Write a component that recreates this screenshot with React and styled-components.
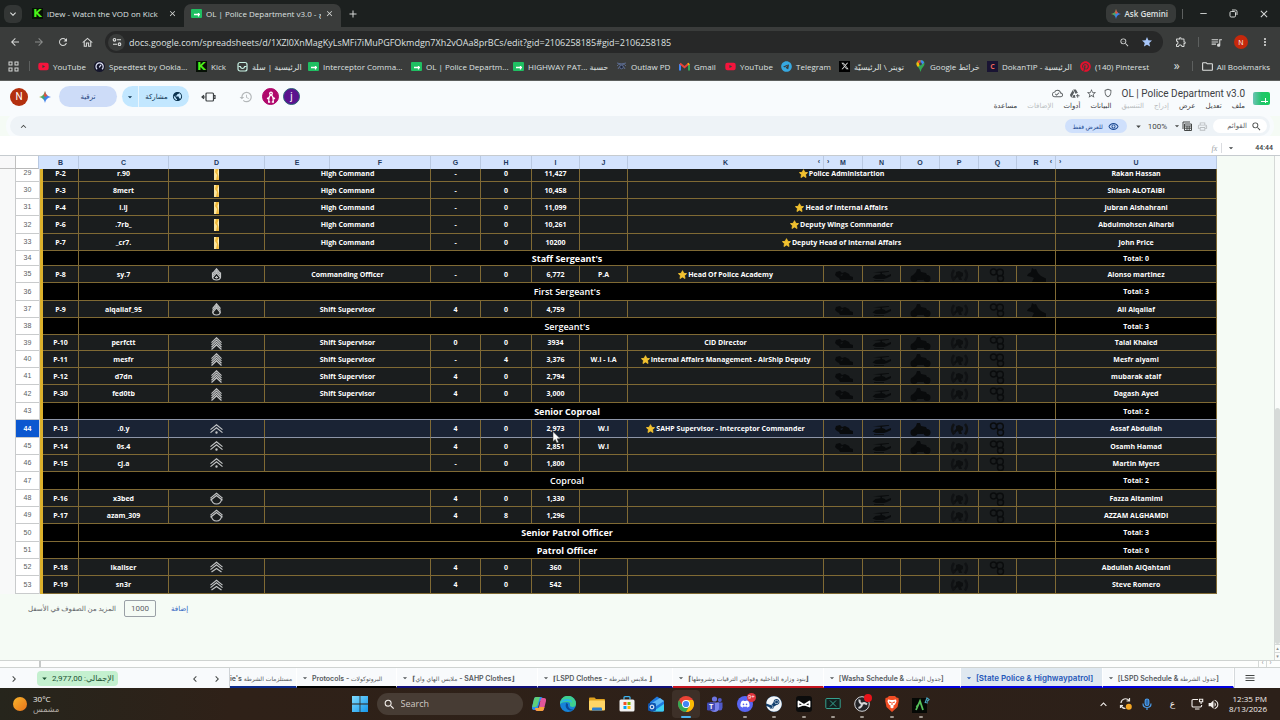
import React, { useState } from "react";
import styled, { createGlobalStyle, css } from "styled-components";
import {
  MdAdd,
  MdArrowBack,
  MdArrowDropDown,
  MdArrowForward,
  MdClose,
  MdHistory,
  MdKeyboardArrowDown,
  MdKeyboardArrowLeft,
  MdKeyboardArrowRight,
  MdKeyboardArrowUp,
  MdMenu,
  MdMoreVert,
  MdOutlineAddToDrive,
  MdOutlineCloudDone,
  MdOutlineExtension,
  MdOutlineFolder,
  MdOutlineHome,
  MdOutlinePrint,
  MdOutlineRemoveRedEye,
  MdOutlineShield,
  MdPublic,
  MdQueueMusic,
  MdRefresh,
  MdRemove,
  MdSearch,
  MdStar,
  MdStarBorder,
  MdVolumeUp,
  MdZoomOut
} from "react-icons/md";
import {
  FaDiscord,
  FaPinterest,
  FaSteam,
  FaTelegram,
  FaXTwitter,
  FaYoutube
} from "react-icons/fa6";

const URL_TEXT =
  "docs.google.com/spreadsheets/d/1XZl0XnMagKyLsMFi7iMuPGFOkmdgn7Xh2vOAa8prBCs/edit?gid=2106258185#gid=2106258185";

const bookmarks = [
  { label: "YouTube", icon: "youtube", w: 56 },
  { label: "Speedtest by Ookla...", icon: "speed", w: 102 },
  { label: "Kick", icon: "kick", w: 41 },
  { label: "الرئيسية | سلة", icon: "salla", w: 71 },
  { label: "Interceptor Comma...", icon: "sheet", w: 103 },
  { label: "OL | Police Departm...", icon: "sheet", w: 102 },
  { label: "HIGHWAY PAT... حسبة", icon: "sheet", w: 103 },
  { label: "Outlaw PD", icon: "outlaw", w: 63 },
  { label: "Gmail", icon: "gmail", w: 46 },
  { label: "YouTube", icon: "youtube", w: 56 },
  { label: "Telegram", icon: "telegram", w: 58 },
  { label: "تويتر \\ الرئيسيّة", icon: "x", w: 76 },
  { label: "Google خرائط", icon: "maps", w: 72 },
  { label: "DokanTIP - الرئيسية", icon: "dokan", w: 93 },
  { label: "(140) Pinterest", icon: "pinterest", w: 68 }
];

const menus = [
  { label: "ملف" },
  { label: "تعديل" },
  { label: "عرض" },
  { label: "إدراج", off: true },
  { label: "التنسيق", off: true },
  { label: "البيانات" },
  { label: "أدوات" },
  { label: "الإضافات", off: true },
  { label: "مساعدة" }
];

const columns = [
  { name: "", w: 24 },
  { name: "", w: 4 },
  { name: "B", w: 36 },
  { name: "C", w: 90 },
  { name: "D", w: 96 },
  { name: "E", w: 65 },
  { name: "F", w: 101 },
  { name: "G", w: 50 },
  { name: "H", w: 51 },
  { name: "I", w: 48 },
  { name: "J", w: 48 },
  { name: "K", w: 196, before: true },
  { name: "M", w: 39, after: true },
  { name: "N", w: 38 },
  { name: "O", w: 39 },
  { name: "P", w: 39 },
  { name: "Q", w: 38 },
  { name: "R", w: 39, before: true },
  { name: "U", w: 161, after: true }
];

const rows = [
  { n: 29, h: 17, id: "P-2", nick: "r.90", rank: "bar", role: "High Command", g: "-", hh: "0", pts: "11,427", wide: "Police Administartion", star: true, name: "Rakan Hassan" },
  { n: 30, h: 17, id: "P-3", nick: "8mert", rank: "bar", role: "High Command", g: "-", hh: "0", pts: "10,458", wide: " ", name: "Shlash ALOTAIBI" },
  { n: 31, h: 17, id: "P-4", nick: "i.lj", rank: "bar", role: "High Command", g: "-", hh: "0", pts: "11,099", wide: "Head of Internal Affairs", star: true, name: "Jubran Alshahrani" },
  { n: 32, h: 18, id: "P-6", nick: ".7rb_", rank: "bar", role: "High Command", g: "-", hh: "0", pts: "10,261", wide: "Deputy Wings Commander", star: true, name: "Abdulmohsen Alharbi" },
  { n: 33, h: 17, id: "P-7", nick: "_cr7.", rank: "bar", role: "High Command", g: "-", hh: "0", pts: "10200", wide: "Deputy Head of Internal Affairs", star: true, name: "John Price" },
  { n: 34, h: 15, section: "Staff Sergeant's", total: 0, big: true },
  { n: 35, h: 17, id: "P-8", nick: "sy.7", rank: "staff", role: "Commanding Officer", g: "-", hh: "0", pts: "6,772", j: "P.A", k: "Head Of Police Academy", star: true, wings: "MNOPQR", name: "Alonso martinez" },
  { n: 36, h: 18, section: "First Sergeant's", total: 3 },
  { n: 37, h: 17, id: "P-9", nick: "alqallaf_95", rank: "first", role: "Shift Supervisor", g: "4", hh: "0", pts: "4,759", wings: "MNOPQR", name: "Ali Alqallaf" },
  { n: 38, h: 17, section: "Sergeant's", total: 3 },
  { n: 39, h: 16, id: "P-10", nick: "perfctt", rank: "four", role: "Shift Supervisor", g: "0", hh: "0", pts: "3934", k: "CID Director", wings: "MNOPQ", name: "Talal Khaled" },
  { n: 40, h: 17, id: "P-11", nick: "mesfr", rank: "four", role: "Shift Supervisor", g: "-", hh: "4", pts: "3,376", j: "W.I - I.A", k: "Internal Affairs Management - AirShip Deputy", star: true, wings: "MNOPQ", name: "Mesfr alyami" },
  { n: 41, h: 17, id: "P-12", nick: "d7dn", rank: "four", role: "Shift Supervisor", g: "4", hh: "0", pts: "2,794", wings: "MNOPQ", name: "mubarak ataif" },
  { n: 42, h: 18, id: "P-30", nick: "fed0tb", rank: "four", role: "Shift Supervisor", g: "4", hh: "0", pts: "3,000", wings: "MNOPQ", name: "Dagash Ayed" },
  { n: 43, h: 17, section: "Senior Coproal", total: 2, big: true },
  { n: 44, h: 18, id: "P-13", nick: ".0.y", rank: "senior", g: "4", hh: "0", pts: "2,973", j: "W.I", k: "SAHP Supervisor - Interceptor Commander", star: true, wings: "MNOPQ", name: "Assaf Abdullah" },
  { n: 45, h: 17, id: "P-14", nick: "0s.4", rank: "senior", g: "4", hh: "0", pts: "2,851", j: "W.I", wings: "MNOPQ", name: "Osamh Hamad" },
  { n: 46, h: 17, id: "P-15", nick: "cj.a", rank: "senior", g: "-", hh: "0", pts: "1,800", wings: "PQ", name: "Martin Myers" },
  { n: 47, h: 18, section: "Coproal", total: 2 },
  { n: 48, h: 17, id: "P-16", nick: "x3bed", rank: "cop", g: "4", hh: "0", pts: "1,330", wings: "NPQ", name: "Fazza Altamimi" },
  { n: 49, h: 17, id: "P-17", nick: "azam_309", rank: "cop", g: "4", hh: "8", pts: "1,296", wings: "NPQ", name: "AZZAM ALGHAMDI" },
  { n: 50, h: 18, section: "Senior Patrol Officer", total: 3, big: true },
  { n: 51, h: 17, section: "Patrol Officer", total: 0, big: true },
  { n: 52, h: 17, id: "P-18", nick: "lkaiiser", rank: "two", g: "4", hh: "0", pts: "360", wings: "PQ", name: "Abdullah AlQahtani" },
  { n: 53, h: 18, id: "P-19", nick: "sn3r", rank: "two", g: "4", hh: "0", pts: "542", wings: "P", name: "Steve Romero" }
];

const sheetTabs = [
  { label: "ie's مستلزمات الشرطة", w: 68, line: "#0b2a8c", cut: true },
  { label: "Protocols - البروتوكولات", w: 99, line: "#000" },
  { label: "⌈ملابس الهاي واي - SAHP Clothes⌋", w: 141, line: "#10107a" },
  { label: "⌈LSPD Clothes - ملابس الشرطة ⌋", w: 135, line: "#10107a" },
  { label: "⌈بنود وزارة الداخلية وقوانين الترقيات وشروطها⌋", w: 151, line: "#c4131f" },
  { label: "[Washa Schedule & جدول الوشات]", w: 137, line: "#0000e0" },
  { label: "[State Police & Highwaypatrol]", w: 142, line: "#0000e0", active: true },
  { label: "[LSPD Schedule & جدول الشرطة]", w: 131, line: "#0000e0" }
];

function App() {
  const [url, setUrl] = useState(URL_TEXT);
  const [rowCount, setRowCount] = useState("1000");
  const [search, setSearch] = useState("");

  return (
    <Page>
      <GlobalStyle />
      <TabStrip>
        <TabMenuButton aria-label="Search tabs">
          <MdKeyboardArrowDown size={12} />
        </TabMenuButton>
        <BrowserTab>
          <SiteIcon name="kick" />
          <TabTitle>iDew - Watch the VOD on Kick</TabTitle>
          <IconButton aria-label="Close tab">
            <MdClose size={9} />
          </IconButton>
        </BrowserTab>
        <BrowserTab $active>
          <SiteIcon name="sheet" />
          <TabTitle>OL | Police Department v3.0 - ج</TabTitle>
          <IconButton aria-label="Close tab">
            <MdClose size={9} />
          </IconButton>
        </BrowserTab>
        <IconButton aria-label="New tab">
          <MdAdd size={12} />
        </IconButton>
        <Spacer />
        <GeminiButton>
          <Spark size={10} />
          Ask Gemini
        </GeminiButton>
        <Divider />
        <WindowButtons>
          <IconButton aria-label="Minimize">
            <MdRemove size={11} />
          </IconButton>
          <IconButton aria-label="Restore">
            <svg width="9" height="9" viewBox="0 0 9 9" fill="none" stroke="currentColor">
              <rect x="1" y="2.5" width="5.5" height="5.5" rx="1.2" />
              <path d="M3 1h3.5Q8 1 8 2.5V6" />
            </svg>
          </IconButton>
          <IconButton aria-label="Close">
            <MdClose size={12} />
          </IconButton>
        </WindowButtons>
      </TabStrip>

      <AddressBar>
        <NavButtons>
          <IconButton aria-label="Back"><MdArrowBack size={12} /></IconButton>
          <IconButton aria-label="Forward" $dim><MdArrowForward size={12} /></IconButton>
          <IconButton aria-label="Reload"><MdRefresh size={12} /></IconButton>
          <IconButton aria-label="Home"><MdOutlineHome size={13} /></IconButton>
        </NavButtons>
        <Omnibox>
          <SiteInfo aria-label="Site information">
            <svg width="10" height="10" viewBox="0 0 10 10" fill="none" stroke="currentColor" strokeWidth="1.1">
              <circle cx="2.5" cy="2.8" r="1.3" />
              <path d="M5 2.8h4M1 7.2h4" />
              <circle cx="7.5" cy="7.2" r="1.3" />
            </svg>
          </SiteInfo>
          <UrlInput aria-label="Address" value={url} onChange={e => setUrl(e.target.value)} />
          <IconButton aria-label="Zoom"><MdZoomOut size={11} /></IconButton>
          <IconButton aria-label="Bookmark" $tint="#a8c7fa"><MdStar size={12} /></IconButton>
        </Omnibox>
        <BarTools>
          <IconButton aria-label="Extensions"><MdOutlineExtension size={12} /></IconButton>
          <Divider />
          <IconButton aria-label="Media"><MdQueueMusic size={13} /></IconButton>
          <Avatar $size={14} $bg="#c5280c">N</Avatar>
          <IconButton aria-label="More"><MdMoreVert size={12} /></IconButton>
        </BarTools>
      </AddressBar>

      <BookmarkBar>
        <IconButton aria-label="Apps">
          <svg width="11" height="11" viewBox="0 0 11 11" fill="none" stroke="currentColor">
            <rect x="1" y="1" width="3" height="3" />
            <rect x="7" y="1" width="3" height="3" />
            <rect x="1" y="7" width="3" height="3" />
            <rect x="7" y="7" width="3" height="3" />
          </svg>
        </IconButton>
        <Divider />
        <BookmarkList>
          {bookmarks.map((b, index) => (
            <Bookmark key={index} href="#" $w={b.w}>
              <SiteIcon name={b.icon} />
              <span>{b.label}</span>
            </Bookmark>
          ))}
        </BookmarkList>
        <More>»</More>
        <Divider />
        <AllBookmarks href="#">
          <MdOutlineFolder size={13} />
          All Bookmarks
        </AllBookmarks>
      </BookmarkBar>

      <DocHeader>
        <DocActions>
          <Avatar $size={18} $bg="#b3300f">N</Avatar>
          <Spark size={12} />
          <UpgradeButton>ترقية</UpgradeButton>
          <ShareGroup>
            <ShareCaret aria-label="Share options"><MdArrowDropDown size={10} /></ShareCaret>
            <ShareButton>
              مشاركة
              <MdPublic size={11} />
            </ShareButton>
          </ShareGroup>
          <IconButton aria-label="Meet" $tint="#3c4043">
            <svg width="15" height="12" viewBox="0 0 15 12" fill="none" stroke="currentColor" strokeWidth="1.2">
              <rect x="5" y="2" width="7.5" height="8" rx="1" />
              <path d="M3 4.2L1 6l2 1.800M1 6h3.500M12.500 4.500H14v3h-1.500" />
            </svg>
          </IconButton>
          <IconButton aria-label="History" $tint="#b4b8ba"><MdHistory size={14} /></IconButton>
          <Viewers>
            <Avatar $size={17} $bg="#b0086c" $ring="#b0086c">
              <svg width="10" height="12" viewBox="0 0 10 12" fill="none" stroke="#fff" strokeWidth="1.3">
                <circle cx="5" cy="2.5" r="1.3" />
                <path d="M5 3.8Q2.5 5 2.8 10.5M5 3.8Q7.5 5 7.2 10.5M2.5 6.5L1.2 8M7.5 6.5L8.8 8M2 11h2.2M5.8 11H8" />
              </svg>
            </Avatar>
            <Avatar $size={17} $bg="#5b128f" $ring="#2a6478">j</Avatar>
          </Viewers>
        </DocActions>
        <DocInfo>
          <div>
            <TitleRow>
              <MdOutlineCloudDone size={11} />
              <MdOutlineAddToDrive size={11} />
              <MdStarBorder size={11} />
              <MdOutlineShield size={10} />
              <h1>OL | Police Department v3.0</h1>
            </TitleRow>
            <MenuRow dir="rtl">
              {menus.map(m => (
                <MenuButton key={m.label} $off={m.off}>{m.label}</MenuButton>
              ))}
            </MenuRow>
          </div>
          <svg width="17" height="14" viewBox="0 0 17 14">
            <defs>
              <linearGradient id="doc" x1="0" x2="1">
                <stop offset="0" stopColor="#6cc3b4" />
                <stop offset="0.5" stopColor="#22c46c" />
                <stop offset="1" stopColor="#17ce5c" />
              </linearGradient>
            </defs>
            <rect width="17" height="13" rx="2" fill="url(#doc)" />
            <path d="M8 9.5h7M12.5 6v5" stroke="#fff" />
          </svg>
        </DocInfo>
      </DocHeader>

      <SheetToolbar>
        <IconButton aria-label="Hide menus" $tint="#444746"><MdKeyboardArrowUp size={11} /></IconButton>
        <Spacer />
        <ViewOnly>
          للعرض فقط
          <MdOutlineRemoveRedEye size={11} />
        </ViewOnly>
        <ZoomButton>
          <MdArrowDropDown size={11} />
          100%
        </ZoomButton>
        <IconButton aria-label="Filters" $tint="#444746">
          <MdArrowDropDown size={10} />
          <svg width="10" height="10" viewBox="0 0 10 10" fill="none" stroke="currentColor">
            <path d="M2.5 3h7v6.5h-7zM2.5 5h7M5 5v4.5M7.2 5v4.5M2.5 7.2h7M1 8V1h7" />
          </svg>
        </IconButton>
        <IconButton aria-label="Print" $tint="#b9bdc0"><MdOutlinePrint size={11} /></IconButton>
        <MenuSearch>
          <input aria-label="Menus" dir="rtl" placeholder="القوائم" value={search} onChange={e => setSearch(e.target.value)} />
          <MdSearch size={11} />
        </MenuSearch>
      </SheetToolbar>

      <FormulaBar>
        <em>fx</em>
        <FormulaDivider />
        <MdArrowDropDown size={10} />
        <span>44:44</span>
      </FormulaBar>

      <SheetArea>
        <Gutter />
        <SheetMain>
          <HeadTable>
            <Cols />
            <thead>
              <tr>
                {columns.map((c, index) => (
                  <ColumnHead key={index} $corner={index === 0} $bar={index === 1}>
                    {c.after && <Nudge $side="left">›</Nudge>}
                    {c.name}
                    {c.before && <Nudge $side="right">‹</Nudge>}
                  </ColumnHead>
                ))}
              </tr>
            </thead>
          </HeadTable>
          <BodyClip>
            <BodyTable>
              <Cols />
              <tbody>
                {rows.map(row =>
                  row.section ? (
                    <SectionRow key={row.n} row={row} />
                  ) : (
                    <MemberRow key={row.n} row={row} selected={row.n === 44} />
                  )
                )}
              </tbody>
            </BodyTable>
          </BodyClip>
          <AddRows>
            <label htmlFor="more-rows">المزيد من الصفوف في الأسفل</label>
            <input id="more-rows" value={rowCount} onChange={e => setRowCount(e.target.value)} />
            <button>إضافة</button>
          </AddRows>
        </SheetMain>
        <ScrollTrack>
          <ScrollThumb />
          <ScrollArrow>▴</ScrollArrow>
          <ScrollArrow>▾</ScrollArrow>
        </ScrollTrack>
      </SheetArea>

      <BottomScroll>
        <ScrollStub />
        <Spacer />
        <SideArrow>‹</SideArrow>
        <SideArrow>›</SideArrow>
      </BottomScroll>

      <SheetBar>
        <SheetBarLeft>
          <IconButton aria-label="Side panel" $tint="#444746"><MdKeyboardArrowRight size={12} /></IconButton>
          <SumButton>
            <MdArrowDropDown size={11} />
            <bdi dir="rtl">الإجمالي: 2,977,00</bdi>
          </SumButton>
          <Spacer />
          <IconButton aria-label="Previous sheets" $tint="#444746"><MdKeyboardArrowLeft size={12} /></IconButton>
          <IconButton aria-label="Next sheets" $tint="#444746"><MdKeyboardArrowRight size={12} /></IconButton>
        </SheetBarLeft>
        <SheetTabs>
          {sheetTabs.map(t => (
            <SheetTab key={t.label} $w={t.w} $line={t.line} $active={t.active}>
              {!t.cut && <MdArrowDropDown size={10} />}
              <TabLabel label={t.label} />
            </SheetTab>
          ))}
        </SheetTabs>
        <AllSheets aria-label="All sheets"><MdMenu size={12} /></AllSheets>
      </SheetBar>

      <Taskbar>
        <Weather>
          <Sun />
          <div>
            <div>30°C</div>
            <WeatherNote>مشمس</WeatherNote>
          </div>
        </Weather>
        <TaskCenter>
          <TaskButton aria-label="Start">
            <svg width="16" height="16" viewBox="0 0 16 16">
              <defs>
                <linearGradient id="win" x1="0" y1="0" x2="1" y2="1">
                  <stop offset="0" stopColor="#7fdcff" />
                  <stop offset="1" stopColor="#1597ea" />
                </linearGradient>
              </defs>
              <path fill="url(#win)" d="M0 0h7.6v7.6H0zM8.4 0H16v7.6H8.4zM0 8.4h7.6V16H0zM8.4 8.4H16V16H8.4z" />
            </svg>
          </TaskButton>
          <TaskSearch>
            <MdSearch size={13} />
            <input aria-label="Search" placeholder="Search" />
          </TaskSearch>
          <TaskIcons>
            {taskApps.map(app => (
              <TaskButton key={app.name} aria-label={app.name} $active={app.active} $open={app.open}>
                {app.icon}
              </TaskButton>
            ))}
          </TaskIcons>
        </TaskCenter>
        <Tray>
          <MdKeyboardArrowUp size={13} />
          <svg width="14" height="14" viewBox="0 0 14 14" fill="none" stroke="#e8e4e0" strokeWidth="1.2">
            <path d="M2 6A4.5 4.5 0 0 1 10 3.5M10.5 1v3h-3M2 8q1 3.5 4.5 3.5M1.5 11V8.5H4" />
            <circle cx="9.8" cy="9.8" r="3" fill="#f5a623" stroke="none" />
          </svg>
          <svg width="10" height="13" viewBox="0 0 10 13" fill="none" stroke="#4a9be8" strokeWidth="1.2">
            <rect x="3.2" y="1" width="3.6" height="6.5" rx="1.8" fill="#2d6cb0" />
            <path d="M1 5.5q0 4 4 4t4-4M5 9.5V12" />
          </svg>
          <Language>ع</Language>
          <TrayPair>
            <svg width="13" height="12" viewBox="0 0 13 12" fill="none" stroke="currentColor" strokeWidth="1.1">
              <path d="M7 1.5H2.2Q1 1.5 1 2.7v5Q1 9 2.2 9h7.2q1.2 0 1.2-1.2V7M4 11h4.5M8.5 1.2h3.2v2.6H8.5zM10.1 3.8V6" />
            </svg>
            <MdVolumeUp size={13} />
          </TrayPair>
          <Clock>
            <div>12:35 PM</div>
            <div>8/13/2026</div>
          </Clock>
        </Tray>
      </Taskbar>
    </Page>
  );
}

function Cols() {
  return (
    <colgroup>
      {columns.map((c, index) => (
        <Col key={index} $w={c.w} />
      ))}
    </colgroup>
  );
}

// Arabic runs are set smaller than the latin ones
function TabLabel({ label }) {
  const parts = label.split(/([\u0600-\u06FF][\u0600-\u06FF ]*)/);
  return (
    <span>
      {parts.map((part, index) =>
        index % 2 ? <ArabicRun key={index}>{part}</ArabicRun> : part
      )}
    </span>
  );
}

function SectionRow({ row }) {
  return (
    <Row $h={row.h}>
      <RowNumber>{row.n}</RowNumber>
      <GoldCell />
      <Cell $black />
      <Cell $black $title $big={row.big} colSpan={15}>{row.section}</Cell>
      <Cell $black>Total: {row.total}</Cell>
    </Row>
  );
}

function MemberRow({ row, selected }) {
  return (
    <Row $h={row.h} $selected={selected}>
      <RowNumber $selected={selected}>{row.n}</RowNumber>
      <GoldCell />
      <Cell>{row.id}</Cell>
      <Cell>{row.nick}</Cell>
      <Cell><Rank kind={row.rank} /></Cell>
      <Cell colSpan={2}>{row.role}</Cell>
      <Cell>{row.g}</Cell>
      <Cell>{row.hh}</Cell>
      <Cell>
        {row.pts}
        {selected && <Cursor />}
      </Cell>
      <Cell>{row.j}</Cell>
      {row.wide ? (
        <Cell colSpan={7}>
          {row.star && <GoldStar />}
          {row.wide}
        </Cell>
      ) : (
        <>
          <Cell>
            {row.star && <GoldStar />}
            {row.k}
          </Cell>
          {"MNOPQR".split("").map(w => (
            <Cell key={w}>{row.wings.includes(w) && <Wing kind={w} />}</Cell>
          ))}
        </>
      )}
      <Cell>{row.name}</Cell>
    </Row>
  );
}

function GoldStar() {
  return (
    <StarSvg width="9" height="9" viewBox="0 0 20 19">
      <path
        fill="#f2c230"
        stroke="#f2c230"
        strokeWidth="2"
        strokeLinejoin="round"
        d="M10 1l2.7 5.8 6.3.8-4.6 4.4 1.2 6.3L10 15.2l-5.6 3.1L5.6 12 1 7.6l6.3-.8z"
      />
    </StarSvg>
  );
}

function Cursor() {
  return (
    <CursorSvg width="9" height="13" viewBox="0 0 9 13">
      <path fill="#fff" stroke="#333" strokeWidth="0.5" d="M1 .5v10l2.3-2.1 1.5 3.7 1.8-.8L5.1 7.8h3.2z" />
    </CursorSvg>
  );
}

function Rank({ kind }) {
  if (kind === "bar") {
    return (
      <svg width="5" height="12" viewBox="0 0 5 12">
        <rect width="5" height="12" fill="#f0b93a" />
        <path d="M0 0h2l-1 4 2 3-1 5H0z" fill="#fbe6a0" />
        <path d="M5 0L3.5 4l1 4L5 12z" fill="#fdf0bd" />
      </svg>
    );
  }
  const tops = {
    staff: [0, 2, 4],
    first: [0, 2, 4],
    four: [0, 2.3, 4.6, 6.9],
    senior: [1, 4],
    cop: [0.5, 2.7],
    two: [0.5, 3]
  }[kind];
  const wide = kind === "staff" || kind === "first" ? 8 : kind === "four" ? 10 : 12;
  const x = (13 - wide) / 2;
  return (
    <svg width="13" height="13" viewBox="0 0 13 13" fill="none" stroke="#c3c5c6" strokeWidth="1.2">
      {tops.map(t => (
        <path key={t} d={`M${x} ${t + 5.6}L6.5 ${t + 0.8}L${13 - x} ${t + 5.6}`} />
      ))}
      {kind === "staff" && <path d="M2.5 4.5v5Q3 12 6.5 12t4-2.5v-5M5 9.5h3M6.5 8v2.5" />}
      {kind === "first" && <path d="M2.8 8.2Q2.5 12 6.5 12t3.7-3.8" />}
      {kind === "cop" && <path d="M1.2 6.5Q2 12 6.5 12t5.3-5.500" />}
      {kind === "senior" && <circle cx="6.5" cy="9.5" r="0.6" fill="#c3c5c6" />}
      {kind === "two" && <path d="M1.5 11L6.5 7.5l5 3.500" />}
    </svg>
  );
}

function Wing({ kind }) {
  const shapes = {
    M: <path d="M4 4l4-1 2 2 3-1 4 2 1 2 3 1v3H8l-1-2-2-1-2-2zM8 7l2 1 1-2z" />,
    N: (
      <>
        <path d="M3 4.2l16-1.200v.8L12 4.700V6q3 .5 4 2l5-2v2l-4 2-3 1H6L2.500 9.500l3-2.500 5-.8V4.800z" />
        <path d="M4 12.500h10" stroke="#090b0c" strokeWidth="0.8" />
      </>
    ),
    O: (
      <>
        <circle cx="5" cy="10.5" r="3.5" />
        <circle cx="18" cy="10.5" r="3.5" />
        <path d="M8 1h3l1 3 5 1 2 4-5 3H8L4 7l3-3z" />
      </>
    ),
    P: (
      <>
        <path d="M6 2Q2 7 6 12.500M17 2q4 5 0 10.500" fill="none" stroke="#101214" strokeWidth="2.5" />
        <path d="M8 4l3-1 4 2v3l-2 1 1 3h-3l-1-3-2 1-1 2-1-3 2-2z" fill="#0d0f10" />
      </>
    ),
    Q: (
      <g fill="none" stroke="#0a0c0d" strokeWidth="1.5">
        <circle cx="7.5" cy="4" r="3" />
        <circle cx="14" cy="4.5" r="3.3" />
        <circle cx="14.5" cy="10.5" r="3" />
      </g>
    ),
    R: <path d="M7 0l2 1.500L11 1l2 4 3 3 5 2.500V14H7l2-4-2-1-5-1 1-2 3-2z" />
  };
  return (
    <svg width="23" height="14" viewBox="0 0 23 14" fill="#090b0c">
      {shapes[kind]}
    </svg>
  );
}

function Spark({ size }) {
  return (
    <svg width={size} height={size} viewBox="0 0 12 12">
      <defs>
        <linearGradient id="spark" x1="0" y1="0.3" x2="1" y2="0.7">
          <stop offset="0" stopColor="#e8b52a" />
          <stop offset="0.35" stopColor="#3fa76a" />
          <stop offset="0.6" stopColor="#3c7ff0" />
          <stop offset="1" stopColor="#5b7fe8" />
        </linearGradient>
      </defs>
      <path fill="url(#spark)" d="M6 0Q6.8 5.2 12 6 6.8 6.8 6 12 5.2 6.8 0 6 5.2 5.2 6 0z" />
      <path fill="#e0523f" d="M6 0Q6.5 3.5 8.5 4.8L6 6 4.6 4.3Q5.7 2.8 6 0z" />
    </svg>
  );
}

function SiteIcon({ name }) {
  switch (name) {
    case "kick":
      return <KickBadge>K</KickBadge>;
    case "youtube":
      return <FaYoutube size={11} color="#f5143c" />;
    case "telegram":
      return <FaTelegram size={11} color="#36a8e0" />;
    case "pinterest":
      return <FaPinterest size={11} color="#e60f2c" />;
    case "x":
      return <XBadge><FaXTwitter size={8} /></XBadge>;
    case "dokan":
      return <DokanBadge>C</DokanBadge>;
    case "speed":
      return (
        <svg width="11" height="11" viewBox="0 0 11 11" fill="none" stroke="#dfe3f5" strokeWidth="1.2">
          <circle cx="5.5" cy="5.5" r="5.5" fill="#15162c" stroke="none" />
          <path d="M3.2 8.2A3.6 3.6 0 1 1 8 8.2M5.2 6.3L7 3.8" />
        </svg>
      );
    case "salla":
      return (
        <svg width="11" height="11" viewBox="0 0 11 11" fill="none" stroke="#c8f1e4" strokeWidth="1.2">
          <rect x="1" y="1.5" width="9" height="8.5" rx="2" />
          <path d="M1.5 5.5h1.8q.5 2 2.2 2t2.2-2h1.8" />
        </svg>
      );
    case "sheet":
      return (
        <svg width="11" height="9" viewBox="0 0 11 9">
          <rect width="11" height="9" rx="1" fill="#1fbf62" />
          <path d="M3 5.5h6M7.5 4v3.5" stroke="#fff" strokeWidth="1.3" />
        </svg>
      );
    case "outlaw":
      return (
        <svg width="11" height="10" viewBox="0 0 11 10" fill="none" stroke="#5b6b8f">
          <path d="M1 2l4.5 1L10 2M1 5q1-2 4.5-2T10 5M2 8q1-3 3.5-3T9 8" />
          <circle cx="5.5" cy="6" r="1.8" fill="#1a2238" />
        </svg>
      );
    case "gmail":
      return (
        <svg width="11" height="9" viewBox="0 0 11 9" fill="none" strokeWidth="2">
          <path d="M1 8.5V2" stroke="#4285f4" />
          <path d="M10 8.5V2" stroke="#34a853" />
          <path d="M1 1.5l4.5 3.7L10 1.5" stroke="#ea4335" />
          <path d="M9 2.5l1-1" stroke="#fbbc04" />
        </svg>
      );
    case "maps":
      return (
        <svg width="11" height="12" viewBox="0 0 11 12">
          <path fill="#34a853" d="M5.5 12Q5 9 3 7 1.5 5.5 1.5 4a4 4 0 0 1 8 0q0 1.5-1.5 3-2 2-2.5 5z" />
          <path fill="#4285f4" d="M5.5 0a4 4 0 0 1 3.7 2.5L5.5 6z" />
          <path fill="#ea4335" d="M5.5 0A4 4 0 0 0 2 2l3.5 2z" />
          <path fill="#fbbc04" d="M2 2Q.5 4.500 3 7l2.5-3z" />
          <circle cx="5.5" cy="4" r="1.4" fill="#3c3d3d" />
        </svg>
      );
    default:
      return null;
  }
}

const GlobalStyle = createGlobalStyle`
  * {
    box-sizing: border-box;
  }
  body {
    margin: 0;
    background: #f5fbf5;
  }
  button, input {
    font: inherit;
    color: inherit;
    border: 0;
    padding: 0;
    background: none;
    outline: none;
  }
  a {
    color: inherit;
    text-decoration: none;
  }
  svg {
    flex: none;
  }
`;

const Page = styled.div`
  display: flex;
  flex-direction: column;
  min-height: 100vh;
  overflow: hidden;
  font-family: Roboto, "DejaVu Sans", sans-serif;
  font-size: 8px;
`;

const Spacer = styled.div`
  flex: 1;
`;

const chromeFont = css`
  font-family: "Open Sans", "DejaVu Sans", sans-serif;
  color: #dfe1e0;
`;

const IconButton = styled.button`
  display: flex;
  align-items: center;
  justify-content: center;
  color: ${p => p.$tint || (p.$dim ? "#8a8c8b" : "#d6d8d7")};
`;

const Divider = styled.span`
  width: 1px;
  height: 10px;
  background: #5d605f;
`;

const TabStrip = styled.div`
  ${chromeFont}
  display: flex;
  align-items: center;
  height: 27px;
  padding: 0 10px 0 4px;
  background: #1c201f;
`;

const TabMenuButton = styled.button`
  display: flex;
  align-items: center;
  justify-content: center;
  width: 18px;
  height: 18px;
  border-radius: 6px;
  background: #333635;
`;

const BrowserTab = styled.div`
  display: flex;
  align-items: center;
  gap: 4px;
  width: ${p => (p.$active ? 157 : 162)}px;
  height: 23px;
  align-self: flex-end;
  padding: 0 7px 5px ${p => (p.$active ? 7 : 10)}px;
  border-radius: 7px 7px 0 0;
  background: ${p => (p.$active ? "#3a3c3b" : "transparent")};

  & + button {
    margin-left: 6px;
  }
`;

const TabTitle = styled.span`
  flex: 1;
  min-width: 0;
  overflow: hidden;
  white-space: nowrap;
  font-size: 8px;
`;

const GeminiButton = styled.button`
  display: flex;
  align-items: center;
  gap: 4px;
  height: 19px;
  padding: 0 8px 0 5px;
  margin-right: 6px;
  border-radius: 6px;
  background: #373a39;
  font-size: 8px;
  font-weight: 600;
`;

const WindowButtons = styled.div`
  display: flex;
  align-items: center;
  gap: 20px;
  padding-left: 15px;
`;

const AddressBar = styled.div`
  ${chromeFont}
  display: flex;
  align-items: center;
  height: 27px;
  padding: 3px 9px 0;
  background: #3a3c3b;
`;

const NavButtons = styled.div`
  display: flex;
  gap: 12px;
  width: 96px;
`;

const Omnibox = styled.div`
  display: flex;
  flex: 1;
  align-items: center;
  gap: 11px;
  height: 22px;
  padding: 0 10px 0 3px;
  border-radius: 11px;
  background: #272828;
`;

const SiteInfo = styled.button`
  display: flex;
  align-items: center;
  justify-content: center;
  width: 17px;
  height: 17px;
  margin-right: -7px;
  border-radius: 50%;
  background: #3a3c3b;
`;

const UrlInput = styled.input`
  flex: 1;
  min-width: 0;
  font-size: 9px;
`;

const BarTools = styled.div`
  display: flex;
  align-items: center;
  gap: 11px;
  padding-left: 12px;
`;

const Avatar = styled.span`
  display: flex;
  align-items: center;
  justify-content: center;
  width: ${p => p.$size}px;
  height: ${p => p.$size}px;
  border: ${p => (p.$ring ? `1px solid ${p.$ring}` : "0")};
  border-radius: 50%;
  background: ${p => p.$bg};
  color: #fff;
  font-size: ${p => (p.$size > 15 ? 10 : 7)}px;
`;

const BookmarkBar = styled.nav`
  ${chromeFont}
  display: flex;
  align-items: center;
  height: 27px;
  padding: 0 10px 2px 8px;
  border-bottom: 1px solid #5b5e5d;
  background: #3a3c3b;

  > button {
    margin-right: 10px;
  }
`;

const BookmarkList = styled.div`
  display: flex;
  flex: 1;
  min-width: 0;
  overflow: hidden;
  padding-left: 8px;
`;

const Bookmark = styled.a`
  display: flex;
  flex: none;
  align-items: center;
  gap: 4px;
  width: ${p => p.$w}px;
  height: 16px;
  font-size: 8px;
  white-space: nowrap;
`;

const More = styled.span`
  width: 18px;
  font-size: 12px;
  line-height: 12px;
`;

const AllBookmarks = styled.a`
  display: flex;
  align-items: center;
  gap: 3px;
  padding-left: 8px;
  font-size: 8px;
`;

const KickBadge = styled.span`
  width: 11px;
  height: 11px;
  background: #061005;
  color: #4df31a;
  font: 900 11px/11px "DejaVu Sans", sans-serif;
  text-align: center;
`;

const XBadge = styled.span`
  display: flex;
  align-items: center;
  justify-content: center;
  width: 11px;
  height: 11px;
  background: #000;
`;

const DokanBadge = styled.span`
  width: 11px;
  height: 11px;
  background: #191433;
  color: #f0655a;
  font-size: 7px;
  font-weight: 700;
  line-height: 11px;
  text-align: center;
`;

const DocHeader = styled.header`
  display: flex;
  justify-content: space-between;
  height: 35px;
  padding: 5px 10px 0;
  background: #f8fbfd;
`;

const DocActions = styled.div`
  display: flex;
  align-items: center;
  height: 21px;

  > svg {
    margin: 0 8px 0 11px;
  }
  > button:nth-of-type(2) {
    margin-left: 12px;
  }
  > button:nth-of-type(3) {
    margin-left: 23px;
  }
`;

const UpgradeButton = styled.button`
  width: 58px;
  height: 21px;
  margin-right: 5px;
  border-radius: 11px;
  background: #cddcf8;
  color: #1c3f7c;
  font-size: 7px;
`;

const ShareGroup = styled.div`
  display: flex;
  width: 67px;
  height: 21px;
  overflow: hidden;
  border-radius: 11px;
  background: #c2e7ff;
  color: #0b3350;
`;

const ShareCaret = styled.button`
  display: flex;
  align-items: center;
  justify-content: center;
  width: 17px;
  border-right: 1px solid #eaf6fd;
`;

const ShareButton = styled.button`
  display: flex;
  flex: 1;
  align-items: center;
  justify-content: center;
  gap: 4px;
  font-size: 7px;
`;

const Viewers = styled.div`
  display: flex;
  gap: 4px;
  padding-left: 9px;
`;

const DocInfo = styled.div`
  display: flex;
  align-items: center;
  gap: 8px;
  height: 26px;
`;

const TitleRow = styled.div`
  display: flex;
  align-items: center;
  justify-content: flex-end;
  gap: 6px;
  color: #5a5e61;

  h1 {
    margin: 0 0 0 3px;
    color: #3c4043;
    font-size: 10px;
    font-weight: 400;
    line-height: 13px;
  }
`;

const MenuRow = styled.div`
  display: flex;
  gap: 10px;
  height: 12px;
`;

const MenuButton = styled.button`
  color: ${p => (p.$off ? "#b9bdbf" : "#3c4043")};
  font-size: 7px;
  line-height: 12px;
`;

const SheetToolbar = styled.div`
  display: flex;
  align-items: center;
  gap: 5px;
  height: 20px;
  margin: 0 10px;
  padding: 0 3px 0 8px;
  border-radius: 10px;
  background: #eef3f7;
  box-shadow: 0 0 0 4px #f8fbfd;
`;

const ViewOnly = styled.button`
  display: flex;
  align-items: center;
  justify-content: center;
  gap: 5px;
  width: 62px;
  height: 14px;
  border-radius: 7px;
  background: #cfe0fc;
  color: #1c4a93;
  font-size: 6px;
`;

const ZoomButton = styled.button`
  display: flex;
  align-items: center;
  gap: 4px;
  margin-left: 1px;
  color: #444746;
`;

const MenuSearch = styled.div`
  display: flex;
  align-items: center;
  gap: 4px;
  width: 54px;
  height: 14px;
  padding: 0 5px;
  border-radius: 7px;
  background: #fff;
  color: #444746;

  input {
    flex: 1;
    width: 100%;
    min-width: 0;
    font-size: 7px;
  }
  input::placeholder {
    color: #5f6368;
  }
`;

const FormulaBar = styled.div`
  display: flex;
  align-items: center;
  justify-content: flex-end;
  gap: 4px;
  height: 20px;
  padding: 5px 7px 0;
  border-bottom: 1px solid #c6cbcf;
  background: #fff;
  color: #3c4043;
  font-size: 7px;
  font-weight: 500;

  em {
    color: #9aa0a6;
    font: italic 8px "Liberation Serif", serif;
  }
  span:last-child {
    margin-left: 15px;
  }
`;

const FormulaDivider = styled.span`
  width: 1px;
  height: 10px;
  background: #dadce0;
`;

const SheetArea = styled.main`
  display: flex;
  flex: 1;
`;

const Gutter = styled.div`
  width: 15px;
  background: linear-gradient(#f8f8f9 0 12px, #c0c0c0 12px 13px, #f8f9f9 13px 438px, transparent 438px);
`;

const SheetMain = styled.div`
  flex: 1;
  min-width: 0;
  padding-right: 57px;
`;

const HeadTable = styled.table`
  width: 100%;
  table-layout: fixed;
  border-collapse: separate;
  border-spacing: 0;
`;

const BodyTable = styled(HeadTable)`
  margin-top: -4px;
`;

const BodyClip = styled.div`
  overflow: hidden;
`;

const Col = styled.col`
  width: ${p => p.$w}px;
`;

const ColumnHead = styled.th`
  position: relative;
  height: 13px;
  padding: 0;
  border-right: 1px solid #b9c9e2;
  background: #d3e3fd;
  color: #23395d;
  font: 700 7px/12px "Liberation Sans", sans-serif;

  ${p =>
    p.$corner &&
    css`
      border-left: 1px solid #c0c0c0;
      border-bottom: 1px solid #b7b7b7;
      background: #fff;
    `}
  ${p =>
    p.$bar &&
    css`
      border-right-color: #d3e3fd;
    `}
`;

const Nudge = styled.span`
  position: absolute;
  top: 0;
  ${p => p.$side}: 3px;
`;

const cellLine = "#806a34";

const Cell = styled.td`
  position: relative;
  padding: 1px 0 0;
  border-right: 1px solid ${cellLine};
  border-bottom: 1px solid ${cellLine};
  background: ${p => (p.$black ? "#000" : "#1a1d1e")};
  color: #fff;
  font-family: "Open Sans", sans-serif;
  font-size: ${p => (p.$title ? 9 : 7)}px;
  font-weight: ${p => (p.$title && !p.$big ? 600 : 700)};
  line-height: 10px;
  text-align: center;
  vertical-align: middle;
  white-space: nowrap;

  > svg {
    display: block;
    margin: 0 auto;
  }
`;

const Row = styled.tr`
  height: ${p => p.$h}px;

  ${p =>
    p.$selected &&
    css`
      ${Cell} {
        border-bottom-color: #8d95a8;
        background: #1a2334;
        box-shadow: 0 -1px #8d95a8;
      }
    `}
`;

const GoldCell = styled.td`
  padding: 0;
  border-left: 1px solid #d5d5d5;
  background: #dcb12c;
`;

const RowNumber = styled.th`
  padding: 0;
  border-left: 1px solid #c9cbcc;
  border-bottom: 1px solid #c9cbcc;
  background: ${p => (p.$selected ? "#0b57d0" : "#fff")};
  color: ${p => (p.$selected ? "#fff" : "#5a5d60")};
  font: ${p => (p.$selected ? 700 : 400)} 7px/8px "Liberation Sans", sans-serif;
`;

const StarSvg = styled.svg`
  && {
    display: inline-block;
    margin: 0 1px 0 0;
    vertical-align: -2px;
  }
`;

const CursorSvg = styled.svg`
  && {
    position: absolute;
    z-index: 2;
    top: 11px;
    left: 20px;
  }
`;

const AddRows = styled.div`
  display: flex;
  align-items: center;
  gap: 8px;
  padding: 6px 13px;
  color: #5f6368;

  label {
    font-size: 7px;
  }
  input {
    width: 32px;
    height: 17px;
    border: 1px solid #9aa0a6;
    border-radius: 2px;
    text-align: center;
  }
  button {
    margin-left: 7px;
    color: #2a5bbf;
    font-size: 7px;
  }
`;

const ScrollTrack = styled.div`
  display: flex;
  flex-direction: column;
  width: 6px;
  padding-top: 252px;
  border-left: 1px solid #d5d9d7;
  background: #fafcfa;
`;

const ScrollThumb = styled.div`
  flex: 1;
  border-radius: 3px;
  background: #d6dad8;
`;

const ScrollArrow = styled.span`
  height: 8px;
  border-top: 1px solid #d5d9d7;
  color: #8a8d8f;
  font-size: 5px;
  line-height: 7px;
  text-align: center;
`;

const BottomScroll = styled.div`
  display: flex;
  height: 8px;
  padding-right: 6px;
  border-top: 1px solid #cfd3d1;
  border-bottom: 1px solid #cfd3d1;
  background: #fdfefd;
`;

const ScrollStub = styled.div`
  width: 41px;
  border-right: 2px solid #c6c9c8;
`;

const SideArrow = styled.span`
  width: 8px;
  border-left: 1px solid #d5d9d7;
  color: #8a8d8f;
  font-size: 7px;
  line-height: 5px;
  text-align: center;
`;

const SheetBar = styled.div`
  display: flex;
  height: 20px;
  background: #f8fafc;
`;

const SheetBarLeft = styled.div`
  display: flex;
  align-items: center;
  gap: 10px;
  width: 230px;
  padding: 1px 6px 0 8px;
  border-right: 1px solid #cfd3d6;
`;

const SumButton = styled.button`
  display: flex;
  align-items: center;
  gap: 2px;
  height: 15px;
  margin-left: 7px;
  padding: 0 4px 0 2px;
  border-radius: 4px;
  background: #c4f0cf;
  color: #1b5233;
  font-size: 8px;
  white-space: nowrap;
`;

const SheetTabs = styled.div`
  display: flex;
  flex: 1;
  min-width: 0;
`;

const SheetTab = styled.button`
  display: flex;
  flex: ${p => p.$w} 1 0;
  align-items: center;
  gap: 2px;
  min-width: 0;
  overflow: hidden;
  padding: 2px 0 0 3px;
  border-right: 1px solid #fff;
  border-bottom: 2px solid ${p => p.$line};
  background: ${p => (p.$active ? "#dfe8f0" : "transparent")};
  color: ${p => (p.$active ? "#1f57b8" : "#55595c")};
  font-family: Inter, "DejaVu Sans", sans-serif;
  font-size: ${p => (p.$active ? 8 : 7)}px;
  font-weight: 600;
  white-space: nowrap;

  &:first-child {
    padding-left: 0;
  }
`;

const ArabicRun = styled.span`
  font-family: "DejaVu Sans", sans-serif;
  font-size: 6px;
  font-weight: 400;
`;

const AllSheets = styled.button`
  display: flex;
  align-items: center;
  justify-content: center;
  width: 46px;
  padding-right: 16px;
  border-left: 1px solid #d5d9dc;
  color: #444746;
`;

const Taskbar = styled.footer`
  ${chromeFont}
  display: grid;
  grid-template-columns: 1fr auto 1fr;
  align-items: center;
  height: 32px;
  background: linear-gradient(90deg, #26251c, #2f2118 18%, #2c2019);
  color: #f3efec;
  font-size: 8px;
  line-height: 10px;
`;

const Weather = styled.div`
  display: flex;
  align-items: center;
  gap: 6px;
  padding-left: 13px;
`;

const WeatherNote = styled.div`
  color: #b3aca6;
`;

const Sun = styled.span`
  width: 14px;
  height: 14px;
  border-radius: 50%;
  background: linear-gradient(135deg, #f9b52c, #e8731a);
`;

const TaskCenter = styled.div`
  display: flex;
  align-items: center;
  padding-left: 1px;
`;

const TaskIcons = styled.div`
  display: flex;
  justify-content: space-between;
  width: 411px;
  margin-left: 2px;
`;

const TaskButton = styled.button`
  position: relative;
  display: flex;
  align-items: center;
  justify-content: center;
  width: 28px;
  height: 28px;
  border-radius: 4px;
  background: ${p => (p.$active ? "#3d3028" : "transparent")};

  &::after {
    content: "";
    position: absolute;
    bottom: 0;
    width: ${p => (p.$active ? 10 : 4)}px;
    height: 2px;
    border-radius: 1px;
    background: ${p => (p.$active ? "#4cb4f0" : p.$open ? "#a09890" : "transparent")};
  }
`;

const TaskSearch = styled.label`
  display: flex;
  align-items: center;
  gap: 5px;
  width: 146px;
  height: 22px;
  margin-left: 3px;
  padding: 0 6px;
  border-radius: 11px;
  background: #473c34;

  input {
    width: 100%;
    min-width: 0;
    font-size: 9px;
  }
  input::placeholder {
    color: #cfc9c4;
  }
`;

const DiscordBadge = styled.span`
  display: flex;
  align-items: center;
  justify-content: center;
  width: 16px;
  height: 16px;
  border-radius: 50%;
  background: #5865f2;
  color: #fff;
`;

const SteamBadge = styled.span`
  display: flex;
  border-radius: 50%;
  background: #12406f;
  color: #f2f5f8;
`;

const Unread = styled.span`
  position: absolute;
  top: 3px;
  right: 3px;
  width: 9px;
  height: 9px;
  border-radius: 50%;
  background: #e0343e;
  color: #fff;
  font-size: 6px;
  line-height: 9px;
  text-align: center;
`;

const RecordDot = styled.span`
  position: absolute;
  top: 4px;
  right: 4px;
  width: 8px;
  height: 8px;
  border-radius: 50%;
  background: #e8131a;
`;

const Tray = styled.div`
  display: flex;
  align-items: center;
  justify-content: flex-end;
  gap: 9px;
  padding-right: 13px;
`;

const Language = styled.span`
  padding: 0 7px 0 9px;
  font-size: 9px;
`;

const TrayPair = styled.div`
  display: flex;
  align-items: center;
  gap: 3px;
`;

const Clock = styled.div`
  font-size: 8px;
  text-align: right;
`;

const taskApps = [
  {
    name: "Copilot",
    icon: (
      <svg width="16" height="16" viewBox="0 0 16 16">
        <path d="M5 1h5q1.5 0 2 2l.5 2H9L7 12q-.5 2-2 2H3Q.5 14 1 11l2-8q.5-2 2-2z" fill="#2a8ff0" />
        <path d="M5 1h4L6.5 9q-.5 2-2 2H1.2L3 3q.5-2 2-2z" fill="#5fcf7a" />
        <path d="M11 2h2q2.5 0 2 3l-2 8q-.5 2-2 2H6q-1.5 0-2-2h2q1.5 0 2-2l1.5-7Q10 2 11 2z" fill="#e0559a" />
        <path d="M4 12h3q1 0 1.5-1h5l-.8 2.5Q12 15 11 15H6q-1.500 0-2-3z" fill="#f7a23b" />
      </svg>
    )
  },
  {
    name: "Edge",
    icon: (
      <svg width="16" height="16" viewBox="0 0 16 16">
        <circle cx="8" cy="8" r="8" fill="#1683d8" />
        <path d="M0 8a8 8 0 0 1 16-.5q0 3.5-3.5 3.5-3 0-2.500-2 .5-3-3-3Q2 6 0 8z" fill="#3fcf8e" />
        <path d="M0 8q1-5 7-5 5 0 5 4-1-2-4-2Q2 5 0 8z" fill="#2bb5e8" />
        <path d="M6 7q-1.5 6 4 7.5 2 .3 3.5-1Q11 14 9 12 7.5 10 8 8z" fill="#0d4a9b" />
      </svg>
    )
  },
  {
    name: "File Explorer",
    icon: (
      <svg width="16" height="14" viewBox="0 0 16 14">
        <path d="M0 1.5Q0 .5 1 .5h4.5L7 2h8q1 0 1 1v4H0z" fill="#e0a21f" />
        <rect y="3.5" width="16" height="10" rx="1" fill="#ffd566" />
        <path d="M3 13.5v-2q0-1 1-1h8q1 0 1 1v2z" fill="#2d7fd0" />
      </svg>
    )
  },
  {
    name: "Microsoft Store",
    icon: (
      <svg width="16" height="16" viewBox="0 0 16 16">
        <path d="M5 3.5V1.6Q5 .7 6 .7h4q1 0 1 .9v1.9" fill="none" stroke="#3cb3ef" strokeWidth="1.3" />
        <rect x="0.5" y="3.5" width="15" height="12" rx="1.5" fill="#f2f2f2" />
        <rect x="4.5" y="6" width="3" height="3" fill="#f25022" />
        <rect x="8.5" y="6" width="3" height="3" fill="#7fba00" />
        <rect x="4.5" y="10" width="3" height="3" fill="#00a4ef" />
        <rect x="8.5" y="10" width="3" height="3" fill="#ffb900" />
      </svg>
    )
  },
  {
    name: "Outlook",
    icon: (
      <svg width="16" height="16" viewBox="0 0 16 16">
        <path d="M2 6l7-5.5L16 5v9q0 1.5-1.5 1.5h-11Q2 15.5 2 14z" fill="#1f7be0" />
        <path d="M4 7l8-5 4 3-9 6z" fill="#5fb8f5" />
        <path d="M5 15.5L16 8v6q0 1.5-1.5 1.5z" fill="#3fd0f0" />
        <rect y="7" width="8" height="8" rx="1.5" fill="#1056b0" />
        <circle cx="4" cy="11" r="1.9" fill="none" stroke="#fff" />
      </svg>
    )
  },
  {
    name: "Chrome",
    active: true,
    icon: (
      <svg width="16" height="16" viewBox="0 0 16 16">
        <circle cx="8" cy="8" r="8" fill="#ea4335" />
        <path d="M1.07 4A8 8 0 0 0 8 16l3.5-6L8 8H3.4z" fill="#34a853" />
        <path d="M8 16a8 8 0 0 0 6.93-12H8l3.5 6z" fill="#fbbc04" />
        <circle cx="8" cy="8" r="4" fill="#fff" />
        <circle cx="8" cy="8" r="3.1" fill="#4285f4" />
      </svg>
    )
  },
  {
    name: "Teams",
    icon: (
      <svg width="16" height="16" viewBox="0 0 16 16">
        <circle cx="7.5" cy="3" r="2.6" fill="#6d74e0" />
        <circle cx="12.8" cy="4" r="2" fill="#5059c9" />
        <path d="M10 6.5h5.5v5q0 2.5-2.5 3-2 0-3-1z" fill="#5059c9" />
        <path d="M3 6.5h9v5q0 4-4 4.5-5 0-5-4z" fill="#7b83eb" />
        <rect y="6.5" width="8" height="8" rx="1.2" fill="#4149b5" />
        <text x="2" y="13" fontSize="7" fontWeight="700" fill="#fff" fontFamily="Liberation Sans, sans-serif">T</text>
      </svg>
    )
  },
  {
    name: "Discord",
    open: true,
    icon: (
      <>
        <DiscordBadge><FaDiscord size={10} /></DiscordBadge>
        <Unread>9+</Unread>
      </>
    )
  },
  { name: "Steam", open: true, icon: <SteamBadge><FaSteam size={16} /></SteamBadge> },
  {
    name: "Medal",
    open: true,
    icon: (
      <svg width="16" height="16" viewBox="0 0 16 16">
        <rect width="16" height="16" rx="3" fill="#0c0c0c" />
        <path d="M2.5 10.5v-5L8 9l5.5-3.5v5L8 8.5z" fill="none" stroke="#fff" strokeWidth="1.8" strokeLinejoin="round" />
      </svg>
    )
  },
  {
    name: "Capture",
    open: true,
    icon: (
      <svg width="16" height="14" viewBox="0 0 16 14" fill="none" stroke="#35a08e">
        <rect x="0.8" y="1.5" width="14.4" height="10" rx="1" fill="#13201f" />
        <path d="M5 3.5l6 6M11 3.5l-6 6" />
      </svg>
    )
  },
  {
    name: "OBS",
    open: true,
    icon: (
      <>
        <svg width="16" height="16" viewBox="0 0 16 16">
          <circle cx="8" cy="8" r="7.3" fill="#232428" stroke="#d5d5d8" />
          <path d="M8 8Q5 7 5.5 3.5M8 8q2.5-2 5 .5M8 8q0 3-3.5 4" fill="none" stroke="#d5d5d8" strokeWidth="2" />
        </svg>
        <RecordDot />
      </>
    )
  },
  {
    name: "Brave",
    open: true,
    icon: (
      <svg width="14" height="16" viewBox="0 0 14 16">
        <path d="M4 0h6l1.5 1.5 2 .5.3 3-1.3 6L7 16l-5.5-5L.2 5l.3-3 2-.5z" fill="#f04d24" />
        <path d="M3 3.5l3 .5h2l3-.5.5 2-1.5 3L8 10l1 1-2 1.5L5 11l1-1-2-1.5-1.5-3z" fill="#fff" />
        <path d="M4 6l2 .5M10 6l-2 .5M7 6v3" stroke="#f04d24" />
      </svg>
    )
  },
  {
    name: "Launcher",
    open: true,
    icon: (
      <svg width="18" height="17" viewBox="0 0 18 17" fill="none">
        <rect y="2" width="15" height="15" fill="#050805" />
        <path d="M4 14l4-9 3 9M6 9l-1.5 2" stroke="#56c25a" strokeWidth="1.8" />
        <path d="M13 7l2-5 2 1.5-2 2M13 6.5l3 .5" stroke="#4aa6c0" strokeWidth="1.2" />
      </svg>
    )
  }
];

export default App;
